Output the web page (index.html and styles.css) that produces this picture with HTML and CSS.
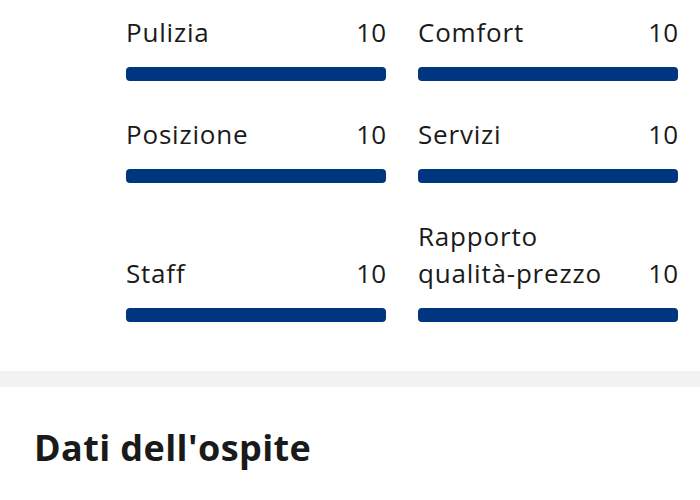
FILE: index.html
```html
<!DOCTYPE html>
<html lang="it">
<head>
    <meta charset="UTF-8">
    <meta name="viewport" content="width=device-width, initial-scale=1.0">
    <title>Valutazioni</title>
    <link rel="stylesheet" href="styles.css">
</head>
<body>
<div id="page">
    <div class="scores">
        <div class="score">
            <div class="head"><span class="name">Pulizia</span><span class="num">10</span></div>
            <div class="bar"></div>
        </div>
        <div class="score">
            <div class="head"><span class="name">Comfort</span><span class="num">10</span></div>
            <div class="bar"></div>
        </div>
        <div class="score">
            <div class="head"><span class="name">Posizione</span><span class="num">10</span></div>
            <div class="bar"></div>
        </div>
        <div class="score">
            <div class="head"><span class="name">Servizi</span><span class="num">10</span></div>
            <div class="bar"></div>
        </div>
        <div class="score">
            <div class="head"><span class="name">Staff</span><span class="num">10</span></div>
            <div class="bar"></div>
        </div>
        <div class="score">
            <div class="head"><span class="name">Rapporto<br>qualità-prezzo</span><span class="num">10</span></div>
            <div class="bar"></div>
        </div>
    </div>
    <div class="divider"></div>
    <h2 class="title">Dati dell'ospite</h2>
</div>
</body>
</html>
```

FILE: styles.css
```css
body {
    margin: 0;
    background: #fff;
    color: #1a1a1a;
    font-family: "Open Sans", "Noto Sans", sans-serif;
}

#page {
    width: 700px;
    height: 500px;
    overflow: hidden;
}

.scores {
    display: grid;
    grid-template-columns: 260px 260px;
    column-gap: 32px;
    row-gap: 35px;
    padding: 14px 0 0 126px;
}

.score {
    display: flex;
    flex-direction: column;
    justify-content: flex-end;
}

.head {
    display: flex;
    justify-content: space-between;
    align-items: flex-end;
    font-size: 26px;
    line-height: 37px;
    letter-spacing: 0.8px;
}

.num {
    letter-spacing: 0;
}

.bar {
    height: 14px;
    margin-top: 16px;
    background: #003580;
    border-radius: 4px;
}

.divider {
    height: 16px;
    margin-top: 49px;
    background: #f2f2f2;
}

.title {
    margin: 0;
    padding: 39px 0 0 34px;
    font-size: 36px;
    line-height: 44px;
    font-weight: 700;
    letter-spacing: 0.4px;
}
```
